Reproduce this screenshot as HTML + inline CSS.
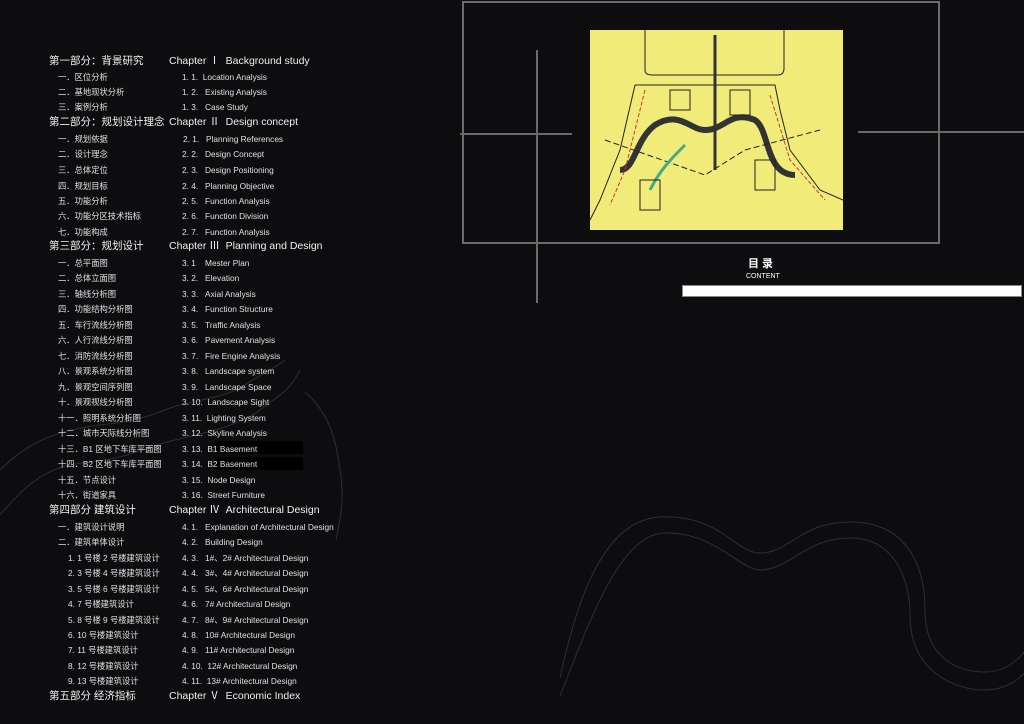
<!DOCTYPE html>
<html><head><meta charset="utf-8"><style>
body{margin:0;background:#0d0d0f;}
#p{position:relative;width:1024px;height:724px;overflow:hidden;background:#0d0d0f;font-family:"Liberation Sans","Noto Sans CJK SC",sans-serif;color:#e8e8e8;}
.t{position:absolute;white-space:nowrap;line-height:12px;}
.h{font-size:10.5px;color:#f0f0f0;}
.s{font-size:8.3px;color:#e0e0e0;}
</style></head><body><div id="p">
<svg width="1024" height="724" style="position:absolute;left:0;top:0" fill="none" stroke="#2f2f33" stroke-width="1">
<path d="M560 678 C575 610 600 520 660 517 C720 514 735 553 760 553 C790 553 800 522 850 522 C910 522 925 570 925 610 C925 660 960 672 985 672 C1005 672 1018 660 1024 652"/>
<path d="M560 696 C590 620 620 534 665 533 C715 532 740 570 760 570 C790 570 805 538 850 538 C895 538 910 580 910 615 C910 672 955 690 985 690 C1005 690 1018 680 1024 673"/>
<path d="M0 470 C30 440 60 430 100 425 C150 420 160 410 180 405 C210 398 230 395 245 385 C260 375 275 368 285 360"/>
<path d="M0 515 C30 480 50 465 90 462 C130 458 150 445 175 440 C210 432 240 425 260 410 C280 395 290 390 300 370"/>
<path d="M305 392 C325 410 335 430 340 470 C345 500 340 520 336 540"/>
</svg>
<!-- top right -->
<div style="position:absolute;left:462px;top:1px;width:474px;height:239px;border:2px solid #6b6b6b;"></div>
<div style="position:absolute;left:590px;top:30px;width:253px;height:200px;background:#f1ec7a;overflow:hidden">
<svg width="253" height="200" fill="none" stroke="#222" stroke-width="1">
<path d="M55 0 V40 Q55 45 62 45 H188 Q194 45 194 38 V0"/>
<path d="M45 55 H185 L190 80 L200 120 L230 160 L253 170"/>
<path d="M45 55 L30 120 L10 170 L0 190"/>
<path d="M30 140 C45 140 45 110 65 95 C90 80 100 100 115 100 C135 100 140 80 165 90 C180 100 175 145 205 145" stroke="#333" stroke-width="6"/>
<path d="M125 5 L125 140" stroke="#333" stroke-width="3"/>
<path d="M15 110 L115 145 L155 120 L230 100" stroke-dasharray="6 3"/>
<path d="M60 160 C70 140 80 130 95 115" stroke="#4a8" stroke-width="3"/>
<path d="M55 60 L35 140 L20 175" stroke="#c33" stroke-dasharray="4 2"/>
<path d="M180 65 L200 130 L235 170" stroke="#c33" stroke-dasharray="4 2"/>
<path d="M80 60 h20 v20 h-20z M140 60 h20 v25 h-20z M165 130 h20 v30 h-20z M50 150 h20 v30 h-20z"/>
</svg></div>
<div style="position:absolute;left:536px;top:50px;width:2px;height:253px;background:#6b6b6b"></div>
<div style="position:absolute;left:460px;top:133px;width:112px;height:2px;background:#6b6b6b"></div>
<div style="position:absolute;left:858px;top:131px;width:166px;height:2px;background:#6b6b6b"></div>
<div class="t" style="left:748px;top:258px;font-size:11px;font-weight:bold;color:#fff">目 录</div>
<div class="t" style="left:746px;top:271px;font-size:7px;color:#fff">CONTENT</div>
<div style="position:absolute;left:682px;top:285px;width:338px;height:10px;background:#fff;border:1px solid #888"></div>
<div style="position:absolute;left:215px;top:441px;width:88px;height:13px;background:#000"></div>
<div style="position:absolute;left:215px;top:457px;width:88px;height:13px;background:#000"></div>
<!-- left column -->
<div class="t h" style="left:49px;top:55px">第一部分：背景研究</div>
<div class="t s" style="left:58px;top:71px">一．区位分析</div>
<div class="t s" style="left:58px;top:86px">二．基地现状分析</div>
<div class="t s" style="left:58px;top:101px">三．案例分析</div>
<div class="t h" style="left:49px;top:116px">第二部分：规划设计理念</div>
<div class="t s" style="left:58px;top:133px">一．规划依据</div>
<div class="t s" style="left:58px;top:148px">二．设计理念</div>
<div class="t s" style="left:58px;top:164px">三．总体定位</div>
<div class="t s" style="left:58px;top:180px">四．规划目标</div>
<div class="t s" style="left:58px;top:195px">五．功能分析</div>
<div class="t s" style="left:58px;top:210px">六．功能分区技术指标</div>
<div class="t s" style="left:58px;top:226px">七．功能构成</div>
<div class="t h" style="left:49px;top:240px">第三部分：规划设计</div>
<div class="t s" style="left:58px;top:257px">一．总平面图</div>
<div class="t s" style="left:58px;top:272px">二．总体立面图</div>
<div class="t s" style="left:58px;top:288px">三．轴线分析图</div>
<div class="t s" style="left:58px;top:303px">四．功能结构分析图</div>
<div class="t s" style="left:58px;top:319px">五．车行流线分析图</div>
<div class="t s" style="left:58px;top:334px">六．人行流线分析图</div>
<div class="t s" style="left:58px;top:350px">七．消防流线分析图</div>
<div class="t s" style="left:58px;top:365px">八．景观系统分析图</div>
<div class="t s" style="left:58px;top:381px">九．景观空间序列图</div>
<div class="t s" style="left:58px;top:396px">十．景观视线分析图</div>
<div class="t s" style="left:58px;top:412px">十一．照明系统分析图</div>
<div class="t s" style="left:58px;top:427px">十二．城市天际线分析图</div>
<div class="t s" style="left:58px;top:443px">十三．B1 区地下车库平面图</div>
<div class="t s" style="left:58px;top:458px">十四．B2 区地下车库平面图</div>
<div class="t s" style="left:58px;top:474px">十五．节点设计</div>
<div class="t s" style="left:58px;top:489px">十六．街道家具</div>
<div class="t h" style="left:49px;top:504px">第四部分 建筑设计</div>
<div class="t s" style="left:58px;top:521px">一．建筑设计说明</div>
<div class="t s" style="left:58px;top:536px">二．建筑单体设计</div>
<div class="t s" style="left:68px;top:552px">1. 1 号楼 2 号楼建筑设计</div>
<div class="t s" style="left:68px;top:567px">2. 3 号楼 4 号楼建筑设计</div>
<div class="t s" style="left:68px;top:583px">3. 5 号楼 6 号楼建筑设计</div>
<div class="t s" style="left:68px;top:598px">4. 7 号楼建筑设计</div>
<div class="t s" style="left:68px;top:614px">5. 8 号楼 9 号楼建筑设计</div>
<div class="t s" style="left:68px;top:629px">6. 10 号楼建筑设计</div>
<div class="t s" style="left:68px;top:644px">7. 11 号楼建筑设计</div>
<div class="t s" style="left:68px;top:660px">8. 12 号楼建筑设计</div>
<div class="t s" style="left:68px;top:675px">9. 13 号楼建筑设计</div>
<div class="t h" style="left:49px;top:690px">第五部分 经济指标</div>
<!-- right column -->
<div class="t h" style="left:169px;top:55px">Chapter Ⅰ &nbsp;Background study</div>
<div class="t s" style="left:182px;top:71px">1. 1. &nbsp;Location Analysis</div>
<div class="t s" style="left:182px;top:86px">1. 2. &nbsp;&nbsp;Existing Analysis</div>
<div class="t s" style="left:182px;top:101px">1. 3. &nbsp;&nbsp;Case Study</div>
<div class="t h" style="left:169px;top:116px">Chapter Ⅱ &nbsp;Design concept</div>
<div class="t s" style="left:183px;top:133px">2. 1. &nbsp;&nbsp;Planning References</div>
<div class="t s" style="left:182px;top:148px">2. 2. &nbsp;&nbsp;Design Concept</div>
<div class="t s" style="left:182px;top:164px">2. 3. &nbsp;&nbsp;Design Positioning</div>
<div class="t s" style="left:182px;top:180px">2. 4. &nbsp;&nbsp;Planning Objective</div>
<div class="t s" style="left:182px;top:195px">2. 5. &nbsp;&nbsp;Function Analysis</div>
<div class="t s" style="left:182px;top:210px">2. 6. &nbsp;&nbsp;Function Division</div>
<div class="t s" style="left:182px;top:226px">2. 7. &nbsp;&nbsp;Function Analysis</div>
<div class="t h" style="left:169px;top:240px">Chapter Ⅲ &nbsp;Planning and Design</div>
<div class="t s" style="left:182px;top:257px">3. 1 &nbsp;&nbsp;&nbsp;Mester Plan</div>
<div class="t s" style="left:182px;top:272px">3. 2. &nbsp;&nbsp;Elevation</div>
<div class="t s" style="left:182px;top:288px">3. 3. &nbsp;&nbsp;Axial Analysis</div>
<div class="t s" style="left:182px;top:303px">3. 4. &nbsp;&nbsp;Function Structure</div>
<div class="t s" style="left:182px;top:319px">3. 5. &nbsp;&nbsp;Traffic Analysis</div>
<div class="t s" style="left:182px;top:334px">3. 6. &nbsp;&nbsp;Pavement Analysis</div>
<div class="t s" style="left:182px;top:350px">3. 7. &nbsp;&nbsp;Fire Engine Analysis</div>
<div class="t s" style="left:182px;top:365px">3. 8. &nbsp;&nbsp;Landscape system</div>
<div class="t s" style="left:182px;top:381px">3. 9. &nbsp;&nbsp;Landscape Space</div>
<div class="t s" style="left:182px;top:396px">3. 10. &nbsp;Landscape Sight</div>
<div class="t s" style="left:182px;top:412px">3. 11. &nbsp;Lighting System</div>
<div class="t s" style="left:182px;top:427px">3. 12. &nbsp;Skyline Analysis</div>
<div class="t s" style="left:182px;top:443px">3. 13. &nbsp;B1 Basement</div>
<div class="t s" style="left:182px;top:458px">3. 14. &nbsp;B2 Basement</div>
<div class="t s" style="left:182px;top:474px">3. 15. &nbsp;Node Design</div>
<div class="t s" style="left:182px;top:489px">3. 16. &nbsp;Street Furniture</div>
<div class="t h" style="left:169px;top:504px">Chapter Ⅳ &nbsp;Architectural Design</div>
<div class="t s" style="left:182px;top:521px">4. 1. &nbsp;&nbsp;Explanation of Architectural Design</div>
<div class="t s" style="left:182px;top:536px">4. 2. &nbsp;&nbsp;Building Design</div>
<div class="t s" style="left:182px;top:552px">4. 3. &nbsp;&nbsp;1#、2# Architectural Design</div>
<div class="t s" style="left:182px;top:567px">4. 4. &nbsp;&nbsp;3#、4# Architectural Design</div>
<div class="t s" style="left:182px;top:583px">4. 5. &nbsp;&nbsp;5#、6# Architectural Design</div>
<div class="t s" style="left:182px;top:598px">4. 6. &nbsp;&nbsp;7# Architectural Design</div>
<div class="t s" style="left:182px;top:614px">4. 7. &nbsp;&nbsp;8#、9# Architectural Design</div>
<div class="t s" style="left:182px;top:629px">4. 8. &nbsp;&nbsp;10# Architectural Design</div>
<div class="t s" style="left:182px;top:644px">4. 9. &nbsp;&nbsp;11# Architectural Design</div>
<div class="t s" style="left:182px;top:660px">4. 10. &nbsp;12# Architectural Design</div>
<div class="t s" style="left:182px;top:675px">4. 11. &nbsp;13# Architectural Design</div>
<div class="t h" style="left:169px;top:690px">Chapter Ⅴ &nbsp;Economic Index</div>
</div></body></html>
